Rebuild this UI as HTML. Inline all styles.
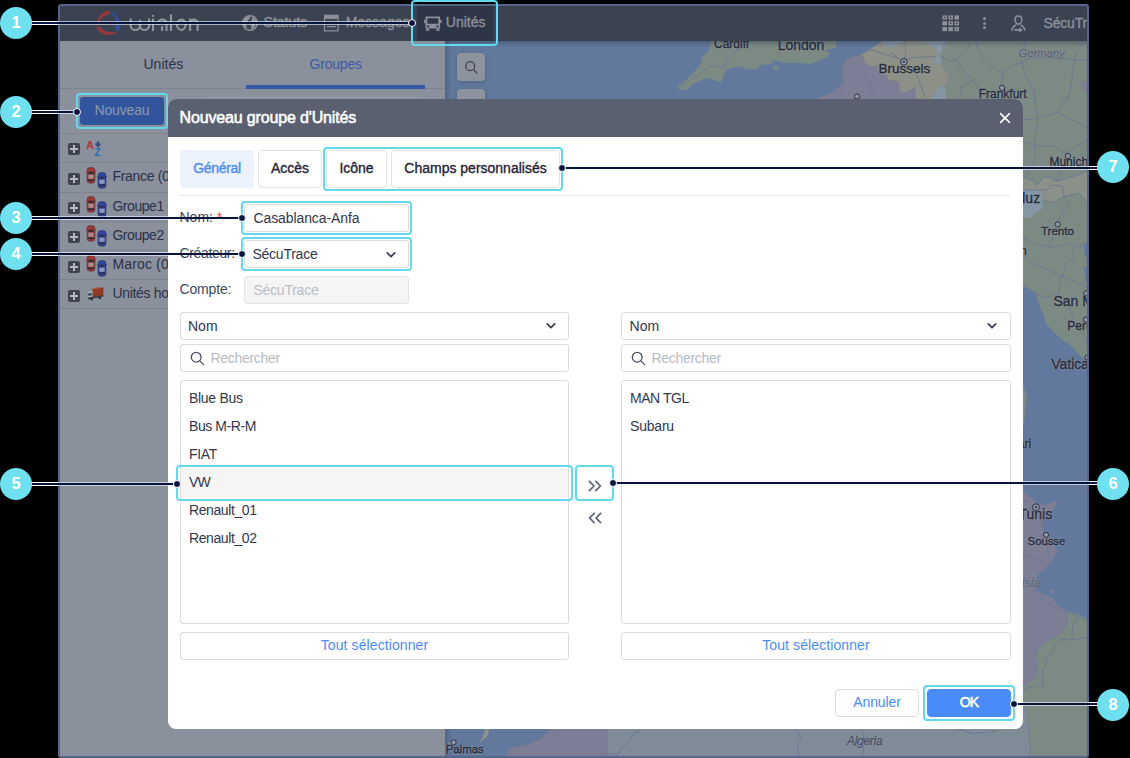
<!DOCTYPE html>
<html lang="fr">
<head>
<meta charset="utf-8">
<title>Nouveau groupe d'Unités</title>
<style>
*{box-sizing:border-box;margin:0;padding:0}
html,body{width:1130px;height:758px;overflow:hidden;background:#000}
body{position:relative;font-family:"Liberation Sans",sans-serif;font-size:14px;color:#32374e}
.abs{position:absolute}
.t{position:absolute;white-space:nowrap;line-height:16px;height:16px}
.med{-webkit-text-stroke:0.35px currentColor}
/* frame */
#frame{left:58px;top:4px;width:1031px;height:754px;background:#54668c;border-radius:3px}
#inner{left:60px;top:6px;width:1027px;height:750px;overflow:hidden;background:#8a919c}
#hdr{left:0;top:0;width:1027px;height:35px;background:#3b4352}
#hdr .t{color:#8b909a}
#acttab{left:357px;top:0;width:76px;height:35px;background:#2d3547}
#side{left:0;top:35px;width:385px;height:715px;background:#8a919c}
#map{left:385px;top:35px;width:642px;height:715px;background:#62799d;overflow:hidden}
.row-sep{position:absolute;left:0;width:385px;height:1px;background:#7d848f}
.plus{position:absolute;left:8px;width:12px;height:12px;border-radius:2px;background:#3e4452}
.plus:before{content:"";position:absolute;left:2px;top:5px;width:8px;height:2px;background:#b6bbc3}
.plus:after{content:"";position:absolute;left:5px;top:2px;width:2px;height:8px;background:#b6bbc3}
.mapbtn{position:absolute;width:28px;height:28px;border-radius:4px;background:#8d939d;box-shadow:0 1px 4px rgba(30,42,66,.3)}
.ml{position:absolute;white-space:nowrap;color:#262b39;font-size:12px;line-height:14px;-webkit-text-stroke:0.4px currentColor;text-shadow:0 0 2px rgba(165,172,185,.9),0 0 1px rgba(165,172,185,.9)}
/* modal */
#modal{left:168px;top:99px;width:855px;height:630px;background:#fff;border-radius:8px;overflow:hidden}
#mhead{left:0;top:0;width:855px;height:38px;background:#5a6070}
.tab{position:absolute;top:51px;height:38px;border:1px solid #e2e2e2;border-radius:4px;background:#fff;color:#1f2437;text-align:center;line-height:34px}
.inp{position:absolute;height:28px;border:1px solid #dcdcdc;border-radius:3px;background:#fff;line-height:26px;padding-left:8px;white-space:nowrap}
.lbl{color:#42485d}
.list{position:absolute;top:281px;width:389px;height:244px;border:1px solid #dcdcdc;border-radius:3px}
.li{position:absolute;left:0;width:387px;height:28px;line-height:28px;padding-left:8px;white-space:nowrap}
.blue{color:#4a8cf7}
/* annotations */
.circ{position:absolute;width:32px;height:32px;border-radius:50%;background:#6ee0f0;color:#fff;font-weight:700;font-size:16.5px;line-height:30px;text-align:center}
.lnw{position:absolute;height:4px;background:#fff}
.lng{position:absolute;height:4px;background:rgba(255,255,255,.6)}
.ln{position:absolute;height:2px;background:#05153f}
.dot{position:absolute;width:8px;height:8px;border-radius:50%;background:#05153f;border:1px solid #fff}
.box{position:absolute;border:2px solid #62d9ef;border-radius:4px}
</style>
</head>
<body>
<div id="frame" class="abs"></div>
<div id="inner" class="abs">
  <!-- HEADER -->
  <div id="hdr" class="abs">
    <div id="acttab" class="abs"></div>
    
    <!-- logo -->
    <svg class="abs" style="left:32px;top:0" width="40" height="34" viewBox="92 6 40 34">
      <path d="M110.2 12.7 C110.4 11.2 108.6 10.6 107.2 10.9 C105 11.4 103.3 12.3 101.9 13.6 C100.3 15 99.1 16.7 98.3 18.6 C97.6 20.2 97 22.4 96.7 25 C97.4 23.4 98.2 22.3 99.2 21.2 C99.7 20.4 100.3 19.7 101 19 C102.3 17.6 103.8 16.5 105.5 15.6 C107 14.8 109.8 14.6 110.2 12.7Z" fill="#953a3b"/>
      <path d="M96.5 27.1 C96.6 28.2 97.1 29.2 97.8 30.2 C98.9 31.6 100.4 32.7 102.3 33.4 C104.3 34.3 106.6 34.9 109 34.9 C111 34.9 112.8 34.4 114.4 33.6 C115.8 33 117 32.2 118 31.3 C116.8 31.8 115.6 32 114.4 32 C112.6 32.3 110.8 32.3 109 32 C107.1 31.7 105.3 31.1 103.7 30.2 C102.2 29.4 101.2 27.8 99.8 27.1 C98.6 26.4 97 26.2 96.5 27.1Z" fill="#953a3b"/>
      <path d="M110.4 11.2 C111.8 11.8 113.2 12.6 114.4 13.6 C115.9 14.8 117.1 16.1 118 17.7 C119 19.3 119.6 21.1 119.8 23 C120 24.4 120.2 25.8 120 27.1 C119.9 28.3 119.6 29.4 118.9 30.2 C118.5 30.8 117.9 31 117.3 30.9 C116.3 30.8 115.6 30.1 115.5 29.3 C115.2 28.1 115.2 26.9 115.3 25.7 C115.6 24.1 116 22.4 116 20.8 C116 19.2 115.4 17.7 114.4 16.3 C113.5 14.8 112.2 13.5 110.8 12.3Z" fill="#2d4ea7"/>
    </svg>
    <svg class="abs" style="left:65px;top:2px" width="80" height="30" viewBox="125 8 80 30" fill="none" stroke="#8d939c" stroke-width="2.1">
      <path d="M130.7 18.6 V25.4 a4.6 4.6 0 0 0 9.2 0 V19.8 M139.9 25.4 a4.6 4.6 0 0 0 9.2 0 V18.6"/>
      <path d="M153 18.6 V31"/><circle cx="153" cy="15.9" r="1.1" fill="#8d939c" stroke="none"/>
      <path d="M158.3 24.9 V23.5 a4.1 4.1 0 0 1 8.2 0 V31 M162.1 26.2 V31"/>
      <path d="M171 14.4 V31"/>
      <ellipse cx="181.3" cy="24.8" rx="4.3" ry="5.15"/>
      <path d="M190.1 18.6 V31 M190.1 23.4 a3.75 3.75 0 0 1 7.5 0 V31"/>
    </svg>
    <!-- statuts -->
    <svg class="abs" style="left:181px;top:8px" width="18" height="18" viewBox="0 0 18 18">
      <circle cx="9" cy="9" r="7.3" fill="#3b4352" stroke="#8b909a" stroke-width="1.5"/>
      <path d="M3 5.2 C4.6 3 7 2.2 9.4 2.3 L8.6 5 L6.4 6.4 L7.4 8.6 L5.2 10.6 L6 14.6 C4 13.6 2.4 11.4 2.3 9 C2.3 7.6 2.5 6.4 3 5.2Z" fill="#8b909a"/>
      <path d="M11.6 3 C13.8 4 15.4 6 15.7 8.4 L13.2 7.4 L11.2 8.2 L10.4 6 Z" fill="#8b909a"/>
      <path d="M9.6 10.4 L12.6 10 L14.6 11.6 C13.6 13.8 11.8 15.2 9.6 15.6 L10.4 13 Z" fill="#8b909a"/>
    </svg>
    <div class="t med" style="left:203.6px;top:8px">Statuts</div>
    <!-- messages -->
    <svg class="abs" style="left:263px;top:8px" width="17" height="18" viewBox="0 0 17 18" fill="none" stroke="#8b909a">
      <rect x="1.5" y="1.3" width="13.6" height="15.6" stroke-width="1.2"/>
      <rect x="1.5" y="1.3" width="13.6" height="3.6" fill="#8b909a" stroke="none"/>
      <path d="M4 9.2 H12.6 M4 12.6 H12.6" stroke-width="1.3"/>
    </svg>
    <div class="t med" style="left:285.7px;top:8px">Messages</div>
    <!-- unites -->
    <svg class="abs" style="left:364px;top:9.5px" width="17.6" height="15.4" viewBox="0 0 19 16" preserveAspectRatio="none">
      <path d="M2.6 0.6 H16.4 a1 1 0 0 1 1 1 V13 H1.6 V1.6 a1 1 0 0 1 1 -1Z M3.6 2.4 V8 H15.4 V2.4Z M3.2 10 v1.6 h2.6 V10Z M13.2 10 v1.6 h2.6 V10Z" fill="#8b909a" fill-rule="evenodd"/>
      <rect x="0" y="4" width="1.6" height="3.4" fill="#8b909a"/><rect x="17.4" y="4" width="1.6" height="3.4" fill="#8b909a"/>
      <rect x="2.2" y="13" width="3.4" height="2.4" fill="#8b909a"/><rect x="13.4" y="13" width="3.4" height="2.4" fill="#8b909a"/>
    </svg>
    <div class="t med" style="left:385.8px;top:8px">Unités</div>
    <!-- apps grid -->
    <svg class="abs" style="left:881.5px;top:8.5px" width="18" height="17" viewBox="0 0 18 17" fill="#8b909a">
      <rect x="0.4" y="0.4" width="4.6" height="4.2"/><rect x="6.4" y="0.4" width="4.6" height="4.2"/><rect x="12.4" y="0.4" width="4.6" height="4.2"/>
      <rect x="0.4" y="6.2" width="4.6" height="4.2"/><rect x="6.4" y="6.2" width="4.6" height="4.2"/><rect x="12.4" y="6.2" width="4.6" height="4.2"/>
      <rect x="0.4" y="12" width="4.6" height="4.2"/><rect x="6.4" y="12" width="4.6" height="4.2"/><rect x="12.4" y="12" width="4.6" height="4.2"/>
      <g fill="#3b4352"><rect x="2" y="1.8" width="1.4" height="1.4"/><rect x="8" y="1.8" width="1.4" height="1.4"/><rect x="8" y="7.6" width="1.4" height="1.4"/><rect x="14" y="7.6" width="1.4" height="1.4"/><rect x="14" y="13.4" width="1.4" height="1.4"/></g>
    </svg>
    <div class="abs" style="left:922.6px;top:11.2px;width:3px;height:3px;border-radius:50%;background:#8b909a"></div>
    <div class="abs" style="left:922.6px;top:15.6px;width:3px;height:3px;border-radius:50%;background:#8b909a"></div>
    <div class="abs" style="left:922.6px;top:20px;width:3px;height:3px;border-radius:50%;background:#8b909a"></div>
    <!-- user -->
    <svg class="abs" style="left:950px;top:8.5px" width="17" height="19" viewBox="0 0 17 19" fill="none" stroke="#8b909a" stroke-width="1.5">
      <path d="M8.4 1 C10.6 1 11.8 2.6 11.8 4.6 C11.8 6.8 10.4 9.2 8.4 9.2 C6.4 9.2 5 6.8 5 4.6 C5 2.6 6.2 1 8.4 1Z"/>
      <path d="M2 15.8 C2.2 12.4 3.6 11 6.2 10 M10.6 10 C13.2 11 14.6 12.4 14.8 15.8"/>
      <path d="M4.4 14 H9.4 V12 L12.8 14.9 L9.4 17.8 V15.8 H4.4Z" fill="#8b909a" stroke="none"/>
    </svg>
    <div class="t med" style="left:983.6px;top:8.5px;letter-spacing:-0.2px">SécuTrace</div>

  </div>
  <!-- SIDEBAR -->
  <div id="side" class="abs">
    
    <div class="t" style="left:83.5px;top:15px;color:#2c3046">Unités</div>
    <div class="t" style="left:249.5px;top:15px;color:#3a59a6;letter-spacing:-0.2px">Groupes</div>
    <div class="abs" style="left:0;top:47px;width:385px;height:1px;background:#7d848f"></div>
    <div class="abs" style="left:186px;top:44px;width:179px;height:4px;background:#355aa7"></div>
    <div class="abs" style="left:20px;top:56px;width:84px;height:28px;border-radius:3px;background:#30559d;color:#8e98b3;text-align:center;line-height:27px;letter-spacing:-0.15px">Nouveau</div>
    <div class="abs" style="left:145px;top:56px;width:219px;height:28px;border-radius:3px;border:1px solid #949aa4;background:#8c939d"></div>
    <div class="row-sep" style="top:92px"></div>
    <div class="row-sep" style="top:121px"></div>
    <div class="row-sep" style="top:151px"></div>
    <div class="row-sep" style="top:180px"></div>
    <div class="row-sep" style="top:209px"></div>
    <div class="row-sep" style="top:238px"></div>
    <div class="row-sep" style="top:267px"></div>
    <div class="plus" style="top:102px"></div>
    <div class="plus" style="top:132px"></div>
    <div class="plus" style="top:161px"></div>
    <div class="plus" style="top:190px"></div>
    <div class="plus" style="top:220px"></div>
    <div class="plus" style="top:249px"></div>
    <svg class="abs" style="left:26px;top:99px" width="17" height="20" viewBox="0 0 17 20">
      <text x="0" y="8.9" font-family="Liberation Sans" font-size="11" font-weight="700" fill="#ab383b">A</text>
      <text x="8.4" y="15.9" font-family="Liberation Sans" font-size="10" font-weight="700" fill="#2b6bb3">Z</text>
      <path d="M12 1 V5.4 M9.6 3.4 L12 6.4 L14.4 3.4" stroke="#384c78" stroke-width="1.7" fill="none"/>
    </svg>
    <div class="t" style="left:52.4px;top:126.5px;color:#2c3048;letter-spacing:-0.3px">France (0)</div>
    <div class="t" style="left:52.4px;top:156.5px;color:#2c3048;letter-spacing:-0.45px">Groupe1 (3)</div>
    <div class="t" style="left:52.4px;top:186px;color:#2c3048;letter-spacing:-0.45px">Groupe2 (2)</div>
    <div class="t" style="left:52.4px;top:214.5px;color:#2c3048;letter-spacing:0.15px">Maroc (0)</div>
    <div class="t" style="left:52.4px;top:244px;color:#2c3048;letter-spacing:-0.3px">Unités hors groupes</div>
<svg class="abs" style="left:25.8px;top:126px" width="10" height="17" viewBox="0 0 10 17">
 <rect x="1" y="0.6" width="8" height="15.6" rx="3" fill="#9c3838" stroke="#4a2a30" stroke-width="0.5"/>
 <rect x="0" y="4" width="1.2" height="1.6" fill="#a53d3d"/><rect x="8.8" y="4" width="1.2" height="1.6" fill="#a53d3d"/>
 <path d="M2 5.2 Q5 3.6 8 5.2 L7.4 7.2 H2.6Z" fill="#2e3038"/>
 <rect x="2.4" y="7.6" width="5.2" height="4.2" fill="#a98a8e"/>
 <path d="M2.4 12.2 H7.6 L8 13.8 Q5 14.8 2 13.8Z" fill="#2e3038"/>
</svg>
<svg class="abs" style="left:36.6px;top:130.5px" width="10" height="17" viewBox="0 0 10 17">
 <rect x="1" y="0.6" width="8" height="15.6" rx="3" fill="#3144a2" stroke="#232a55" stroke-width="0.5"/>
 <rect x="0" y="4" width="1.2" height="1.6" fill="#3549a6"/><rect x="8.8" y="4" width="1.2" height="1.6" fill="#3549a6"/>
 <path d="M2 5.2 Q5 3.6 8 5.2 L7.4 7.2 H2.6Z" fill="#30344a"/>
 <rect x="2.4" y="7.6" width="5.2" height="4.2" fill="#8f98b8"/>
 <path d="M2.4 12.2 H7.6 L8 13.8 Q5 14.8 2 13.8Z" fill="#30344a"/>
</svg>
<svg class="abs" style="left:25.8px;top:155px" width="10" height="17" viewBox="0 0 10 17">
 <rect x="1" y="0.6" width="8" height="15.6" rx="3" fill="#9c3838" stroke="#4a2a30" stroke-width="0.5"/>
 <rect x="0" y="4" width="1.2" height="1.6" fill="#a53d3d"/><rect x="8.8" y="4" width="1.2" height="1.6" fill="#a53d3d"/>
 <path d="M2 5.2 Q5 3.6 8 5.2 L7.4 7.2 H2.6Z" fill="#2e3038"/>
 <rect x="2.4" y="7.6" width="5.2" height="4.2" fill="#a98a8e"/>
 <path d="M2.4 12.2 H7.6 L8 13.8 Q5 14.8 2 13.8Z" fill="#2e3038"/>
</svg>
<svg class="abs" style="left:36.6px;top:159.5px" width="10" height="17" viewBox="0 0 10 17">
 <rect x="1" y="0.6" width="8" height="15.6" rx="3" fill="#3144a2" stroke="#232a55" stroke-width="0.5"/>
 <rect x="0" y="4" width="1.2" height="1.6" fill="#3549a6"/><rect x="8.8" y="4" width="1.2" height="1.6" fill="#3549a6"/>
 <path d="M2 5.2 Q5 3.6 8 5.2 L7.4 7.2 H2.6Z" fill="#30344a"/>
 <rect x="2.4" y="7.6" width="5.2" height="4.2" fill="#8f98b8"/>
 <path d="M2.4 12.2 H7.6 L8 13.8 Q5 14.8 2 13.8Z" fill="#30344a"/>
</svg>
<svg class="abs" style="left:25.8px;top:184px" width="10" height="17" viewBox="0 0 10 17">
 <rect x="1" y="0.6" width="8" height="15.6" rx="3" fill="#9c3838" stroke="#4a2a30" stroke-width="0.5"/>
 <rect x="0" y="4" width="1.2" height="1.6" fill="#a53d3d"/><rect x="8.8" y="4" width="1.2" height="1.6" fill="#a53d3d"/>
 <path d="M2 5.2 Q5 3.6 8 5.2 L7.4 7.2 H2.6Z" fill="#2e3038"/>
 <rect x="2.4" y="7.6" width="5.2" height="4.2" fill="#a98a8e"/>
 <path d="M2.4 12.2 H7.6 L8 13.8 Q5 14.8 2 13.8Z" fill="#2e3038"/>
</svg>
<svg class="abs" style="left:36.6px;top:188.5px" width="10" height="17" viewBox="0 0 10 17">
 <rect x="1" y="0.6" width="8" height="15.6" rx="3" fill="#3144a2" stroke="#232a55" stroke-width="0.5"/>
 <rect x="0" y="4" width="1.2" height="1.6" fill="#3549a6"/><rect x="8.8" y="4" width="1.2" height="1.6" fill="#3549a6"/>
 <path d="M2 5.2 Q5 3.6 8 5.2 L7.4 7.2 H2.6Z" fill="#30344a"/>
 <rect x="2.4" y="7.6" width="5.2" height="4.2" fill="#8f98b8"/>
 <path d="M2.4 12.2 H7.6 L8 13.8 Q5 14.8 2 13.8Z" fill="#30344a"/>
</svg>
<svg class="abs" style="left:25.8px;top:214px" width="10" height="17" viewBox="0 0 10 17">
 <rect x="1" y="0.6" width="8" height="15.6" rx="3" fill="#9c3838" stroke="#4a2a30" stroke-width="0.5"/>
 <rect x="0" y="4" width="1.2" height="1.6" fill="#a53d3d"/><rect x="8.8" y="4" width="1.2" height="1.6" fill="#a53d3d"/>
 <path d="M2 5.2 Q5 3.6 8 5.2 L7.4 7.2 H2.6Z" fill="#2e3038"/>
 <rect x="2.4" y="7.6" width="5.2" height="4.2" fill="#a98a8e"/>
 <path d="M2.4 12.2 H7.6 L8 13.8 Q5 14.8 2 13.8Z" fill="#2e3038"/>
</svg>
<svg class="abs" style="left:36.6px;top:218.5px" width="10" height="17" viewBox="0 0 10 17">
 <rect x="1" y="0.6" width="8" height="15.6" rx="3" fill="#3144a2" stroke="#232a55" stroke-width="0.5"/>
 <rect x="0" y="4" width="1.2" height="1.6" fill="#3549a6"/><rect x="8.8" y="4" width="1.2" height="1.6" fill="#3549a6"/>
 <path d="M2 5.2 Q5 3.6 8 5.2 L7.4 7.2 H2.6Z" fill="#30344a"/>
 <rect x="2.4" y="7.6" width="5.2" height="4.2" fill="#8f98b8"/>
 <path d="M2.4 12.2 H7.6 L8 13.8 Q5 14.8 2 13.8Z" fill="#30344a"/>
</svg>
    <svg class="abs" style="left:27px;top:246px" width="18" height="14" viewBox="0 0 18 14">
      <path d="M5.4 2.2 L16.4 0.4 V9 L5.4 11.2Z" fill="#93391f"/>
      <path d="M5.4 2.2 L16.4 0.4 L14.6 0 L4 1.6Z" fill="#b4593a"/>
      <path d="M0.8 6 Q1 4.6 2.6 4.4 L5.4 4 V11.4 L0.8 12Z" fill="#a9afb8"/>
      <path d="M1.2 6.6 L4.8 6 V8.2 L1.2 8.8Z" fill="#3a3f4c"/>
      <path d="M0.8 10.6 L16.4 8.2 V9.6 L0.8 12.4Z" fill="#3c404c"/>
      <circle cx="4.6" cy="12" r="1.4" fill="#2a2d35"/><circle cx="12.8" cy="10.8" r="1.4" fill="#2a2d35"/>
    </svg>

  </div>
  <!-- MAP -->
  <div id="map" class="abs">
    <svg class="abs" style="left:0;top:0" width="642" height="715" viewBox="445 41 642 715">
<rect x="445" y="41" width="642" height="715" fill="#62799d"/>
<polygon points="711,41 708.7,50.6 702.5,56.8 701,63.9 688.3,78 677.7,86 677.3,88.7 686.5,89.9 692.7,84.2 706,78 713,79.8 721,82.5 726.4,69.2 737.9,66.5 748.5,69.2 758.2,69.2 758.6,65.7 769.7,63.9 775,62.1 772.4,59.5 783.9,63 794.5,62.7 810.4,63.9 826.4,57.7 829.9,53.3 824.6,49.7 836.1,48 836.6,42.7 835.2,41" fill="#7b8a83"/>
<polygon points="771.2,67.4 775.9,64.8 780,67.4 775.9,69.7" fill="#7b8a83"/>
<g fill="none" stroke="#6b7791" stroke-width="0.95"><path d="M678 88 L712 65.5 L723.5 67.8 L727 60 L736.5 51 L738 41"/></g>
<polygon points="881.4,41 1087,41 1087,361 1082.6,358 1075.3,351.6 1069.7,344.2 1063.2,340.8 1054,332.4 1045.7,323.2 1043.9,315.8 1039.2,304.7 1036.5,295.5 1029,289 1023,286.3 1000,286 1000,120 816,120 817.7,98.4 831.9,93.1 843.4,82.5 841.6,66.5 847.8,58.6 862,54.2 870.8,48.8" fill="#7b8a83"/>
<polygon points="862,54.2 865.5,63 870.8,66.5 877.9,64.8 879.6,72.7 886.7,75.4 888.5,79.8 899.1,81.6 900.9,93.1 908,91.3 915,86.4 915.9,98.4 916,120 816,120 817.7,98.4 831.9,93.1 843.4,82.5 841.6,66.5 847.8,58.6" fill="#7d7e96"/>
<polygon points="862,54.2 870.8,48.8 881.4,43 892,48 899,44.4 906.2,41 922,41 927.4,43.5 936.3,50.6 937.2,55.9 933.6,59.5 934.5,63 941.6,64.8 946.9,72.7 948.7,78 944.2,86 939.8,86.9 934.5,93.1 930,99 930,120 916,120 915.9,98.4 915,86.4 908,91.3 900.9,93.1 899.1,81.6 888.5,79.8 886.7,75.4 879.6,72.7 877.9,64.8 870.8,66.5 865.5,63" fill="#8c9086"/>
<polygon points="881.4,41 883,44.5 888,47.5 895,47.2 900,43.5 905,41" fill="#8596a4"/>
<polygon points="922,41 947,41 945.5,47 942.6,50.5 940,54 941.6,61 941,65 934.5,63 933.6,59.5 937.2,55.9 936.3,50.6 927.4,43.5" fill="#8596a4"/>
<polygon points="939.8,86.9 944.2,86 946,93 947,120 930,120 930,99 934.5,93.1" fill="#8596a4"/>
<polygon points="1079.5,80.6 1087,82 1087,92.6 1083.2,89.6" fill="#7d7e96"/>
<polygon points="1023,177.4 1033.8,180.6 1037,185.3 1043.4,176.6 1052,178.2 1056,181.4 1070.3,177.4 1079.8,174.2 1087.7,171 1087.7,204.4 1079.8,193.3 1064,196.4 1052.9,202.8 1041.8,199.6 1041.8,190 1023,190" fill="#8b9088"/>
<polygon points="1000,190 1041.8,190 1041.8,199.6 1043,207 1042,208.7 1033.7,214.2 1031.9,217.9 1023,217 1000,217" fill="#8596a4"/>
<polygon points="1083.6,244.7 1087,243 1087,258.6 1084.5,253" fill="#62799d"/>
<polygon points="1083.6,266.9 1087,266 1087,284.4 1085.4,278.9" fill="#62799d"/>
<polygon points="1000,388 1023.2,388.6 1025.4,390.4 1026.9,398.7 1025,408.9 1024.5,420 1023,427 1000,427" fill="#7b8a83"/>
<polygon points="1000,492.9 1023.2,492.9 1027.2,493.3 1029,496.6 1032.8,498.5 1036.5,504 1045.7,504.9 1055.9,500.7 1057.7,504 1051.2,511.4 1043.9,519.7 1042,527.1 1045.7,532.6 1052.2,541 1057.7,551.1 1053.1,559.4 1047.6,566.8 1038.3,574.2 1034.6,583.4 1036.5,590.8 1048.5,596.4 1054,598.2 1056.8,605.6 1067,610.4 1068,626 1060.7,633.4 1045.1,642.7 1037.8,650 1035.7,657.3 1038.8,668.8 1032.6,680.3 1023.2,686.5 1000,690" fill="#7d7e96"/>
<polygon points="1049.4,590.8 1054,589.9 1054,593.6 1049.4,593.6" fill="#7d7e96"/>
<polygon points="1067,610.4 1078.5,614.6 1087,618.8 1087,756 1028.4,756 1030.5,750 1029.5,741.8 1028.4,725 1026.3,710.5 1023.2,706.3 1000,706 1000,690 1023.2,686.5 1032.6,680.3 1038.8,668.8 1035.7,657.3 1037.8,650 1045.1,642.7 1060.7,633.4 1068,626" fill="#7b8a83"/>
<polygon points="607.8,700 1000,700 1000,706 1023.2,706.3 1026.3,710.5 1028.4,725 1029.5,741.8 1030.5,750 1028.4,756 607.8,756" fill="#7f8c98"/>
<polygon points="549.7,729 546.2,733.5 539.1,739.7 525,745 511.7,747.3 504.6,756 607.8,756 607.8,700 560,700" fill="#7d7e96"/>
<polygon points="485.1,729 489.2,729 487.8,735.3 483.4,739.7 478,743.2 482.5,737.9" fill="#8f9482"/>
<polygon points="447,743.5 450,742 453,744 451,746.5 447.5,746" fill="#8a8f92"/>
<g fill="none" stroke="#6b7791" stroke-width="0.95" stroke-linejoin="round"><path d="M849.6 57.7 L870.8 49.7 L899 58.6 L903.9 61.8 L911.5 57.7 L936 56.5"/><path d="M905 41 L906 50 L903.9 61.8"/><path d="M849 58 L862 75 L871 83 L876 99"/><path d="M842 66 L844 84 L840 99"/><path d="M871 83 L869 99"/><path d="M917 75 L921 86 L926 99"/><path d="M899 58.6 L890 52"/><path d="M970.4 41.5 L968.1 49 L957.6 58.8 L950 61.8 L938 55"/><path d="M956.9 60.3 L965.1 73.1 L973.4 79.9 L978.7 89.6 L980 99"/><path d="M973.4 79.9 L960.6 86.6 L961.4 94.2 L958.4 99.4"/><path d="M974.9 41.5 L980.2 53.5 L995.2 68.6 L1002.7 73.9 L1005.8 69.3 L1031.3 58 L1062.9 58 L1075 60.3 L1087 59.5"/><path d="M1003.5 74.6 L1000.5 85.9"/><path d="M1025.3 41.5 L1020.8 56.5 L1025.3 76.1 L1034.3 91.1 L1035.1 99.4 L1033.8 95 L1037.8 118.8 L1034.6 142.5 L1035.4 160 L1024.3 177.4"/><path d="M1083.2 41.5 L1076.5 52 L1074.2 61.1 L1070.4 89.6 L1067.4 99.4"/><path d="M945 41 L943 50"/><path d="M1023.5 119.6 L1037 118.8 L1057.6 112.4 L1068.7 95"/><path d="M1057.6 112.4 L1070.3 118.8 L1087.7 127.5"/><path d="M1023.5 141.8 L1035.4 145.7 L1054.5 146.5 L1065.5 153.6 L1087.7 139.4"/><path d="M1023 177.4 L1033.8 180.6 L1037 185.3 L1043.4 176.6 L1052 178.2 L1056 181.4 L1070.3 177.4 L1079.8 174.2 L1087.7 171"/><path d="M1023 190 L1046.5 190 L1051.3 185.3 L1062.4 186.1 L1064 196.4 L1079.8 193.3 L1087.7 204.4"/><path d="M1041.8 199.6 L1052.9 202.8 L1064 196.4 L1068 205"/><path d="M1056 181.4 L1062 170 L1067.9 158"/><path d="M1070.6 205 L1062.3 211.5 L1057.7 222.5"/><path d="M1053 237.3 L1049.4 245.6"/><path d="M1023.2 238.2 L1036.5 243.8 L1052.2 247.5 L1067.9 243.8 L1077.1 247.5 L1087.3 241.9"/><path d="M1073.4 249.3 L1072.5 257.6 L1066.9 264.1 L1062.3 276.1"/><path d="M1023.2 255.8 L1032.8 263.2 L1062.3 276.1 L1087.3 288.1"/><path d="M1060.5 276.1 L1059 293.7"/><path d="M1023.2 284.4 L1038.3 295.5 L1047.6 297.4 L1059 293.7"/><path d="M1067.9 304.7 L1075.3 323.2 L1087.3 341.7"/><path d="M1023 500.3 L1031 502.2"/><path d="M1042 519.7 L1041.6 528 L1045.7 533 L1047.6 546.5 L1048.5 565 L1034.6 589 L1043.9 602.8 L1058.6 609.3 L1079 616.7 L1087 620"/><path d="M1023 555.7 L1036.5 557.6 L1048.5 565"/><path d="M1078.5 616.7 L1072.6 626 L1071.8 639.6"/><path d="M1086.8 637.5 L1071.8 640 L1061.8 639.2 L1055.1 643.8 L1050.3 655.2 L1046.1 657.3 L1045.5 666.7 L1042.6 669.8 L1042.6 687.6 L1034.7 685.9 L1023.2 689.2"/><path d="M558.6 729 L553.3 732.6 L548 733.5"/><path d="M511.7 747.3 L509.9 755.6"/><path d="M549.7 729 L546.2 733.5 L539.1 739.7 L525 745 L511.7 747.3"/><path d="M640 730.8 L634.7 732.3 L625.8 745 L620.5 748.5 L618.8 753.9 L606.4 755"/><path d="M795.8 729 L801 738 L797.5 743 L798.6 755.6"/><path d="M861 729 L864 736 L863 755.6"/><path d="M956.8 729 L972.7 733.7 L997.5 730.8"/><path d="M1028.4 725 L1029.5 741.8 L1030.5 750 L1028.4 756"/></g>
<circle cx="903.9" cy="61.8" r="3.4" fill="#8f95a8" stroke="#2c3140" stroke-width="1"/><circle cx="903.9" cy="61.8" r="1.1" fill="#2c3140"/><circle cx="1002.1" cy="87.8" r="2.6" fill="#8f95a8" stroke="#2c3140" stroke-width="1"/><circle cx="1067.9" cy="156" r="2.6" fill="#8f95a8" stroke="#2c3140" stroke-width="1"/><circle cx="1057.7" cy="224.4" r="2.6" fill="#8f95a8" stroke="#2c3140" stroke-width="1"/><circle cx="1086.3" cy="293.3" r="2.6" fill="#8f95a8" stroke="#2c3140" stroke-width="1"/><circle cx="1086" cy="319.5" r="2.6" fill="#8f95a8" stroke="#2c3140" stroke-width="1"/><circle cx="1087.5" cy="357.5" r="2.6" fill="#8f95a8" stroke="#2c3140" stroke-width="1"/><circle cx="1035.9" cy="507.2" r="3.4" fill="#8f95a8" stroke="#2c3140" stroke-width="1"/><circle cx="1035.9" cy="507.2" r="1.1" fill="#2c3140"/><circle cx="1046" cy="534.9" r="2.6" fill="#8f95a8" stroke="#2c3140" stroke-width="1"/><circle cx="453.6" cy="742.4" r="2.6" fill="#8f95a8" stroke="#2c3140" stroke-width="1"/><circle cx="857" cy="96.5" r="2.6" fill="#8f95a8" stroke="#2c3140" stroke-width="1"/>
</svg>
<div class="abs" style="left:0;top:0;width:7px;height:715px;background:linear-gradient(90deg,rgba(40,50,70,.28),rgba(40,50,70,0))"></div>
<div class="mapbtn" style="left:12px;top:12px"><svg class="abs" style="left:6.5px;top:6.8px" width="14.6" height="14.6" viewBox="0 0 16 16" fill="none" stroke="#3d4250" stroke-width="1.35" stroke-linecap="round"><circle cx="6.8" cy="6.8" r="4.9"/><path d="M10.5 10.5 L14.2 14.2"/></svg></div><div class="mapbtn" style="left:12px;top:48px"></div>
<div class="ml" style="left:269.0px;top:-3.9px;font-size:12px;">Cardiff</div>
<div class="ml" style="left:332.7px;top:-2.6px;font-size:14px;">London</div>
<div class="ml" style="left:433.4px;top:20.9px;font-size:13.5px;">Brussels</div>
<div class="ml" style="left:533.7px;top:45.7px;font-size:12px;">Frankfurt</div>
<div class="ml" style="left:573.5px;top:4.5px;font-size:11.2px;font-style:italic;color:#5b6373">Germany</div>
<div class="ml" style="left:604.4px;top:114.1px;font-size:12px;">Munich</div>
<div class="ml" style="left:556.5px;top:149.7px;font-size:14px;">Vaduz</div>
<div class="ml" style="left:596.0px;top:183.1px;font-size:11.5px;">Trento</div>
<div class="ml" style="left:608.5px;top:252.7px;font-size:14px;">San Marino</div>
<div class="ml" style="left:622.3px;top:277.7px;font-size:12px;">Perugia</div>
<div class="ml" style="left:606.2px;top:316.3px;font-size:14px;">Vatican</div>
<div class="ml" style="left:545.5px;top:395.7px;font-size:12px;">Cagliari</div>
<div class="ml" style="left:573.5px;top:466.4px;font-size:14px;">Tunis</div>
<div class="ml" style="left:582.6px;top:493.0px;font-size:11.3px;">Sousse</div>
<div class="ml" style="left:557.3px;top:535.1px;font-size:12px;font-style:italic;color:#5b6373">Tunisia</div>
<div class="ml" style="left:402.0px;top:693.2px;font-size:12px;font-style:italic;color:#4c5263;letter-spacing:-0.3px">Algeria</div>
<div class="ml" style="left:0.7px;top:701.1px;font-size:11.4px;">Palmas</div>
<div class="ml" style="left:553.0px;top:203.4px;font-size:12px;">Milan</div>
<div class="ml" style="left:390.0px;top:57.7px;font-size:12px;">Amiens</div>

  </div>
  <div class="abs" style="left:385px;top:35px;width:642px;height:6px;background:linear-gradient(180deg,rgba(30,38,58,.32),rgba(30,38,58,0))"></div>
</div>

<!-- MODAL -->
<div id="modal" class="abs">
  <div id="mhead" class="abs"></div>
  
  <div class="t" style="left:11.5px;top:9.7px;height:18px;line-height:18px;font-size:16px;font-weight:400;-webkit-text-stroke:0.55px #fff;color:#fff;letter-spacing:-0.15px">Nouveau groupe d'Unités</div>
  <svg class="abs" style="left:830.6px;top:13px" width="12" height="12" viewBox="0 0 12 12" stroke="#fff" stroke-width="1.7" stroke-linecap="round"><path d="M1.6 1.6 L10.4 10.4 M10.4 1.6 L1.6 10.4"/></svg>
  <div class="tab med" style="left:12px;width:74px;background:#ecf2fe;border-color:#ecf2fe;color:#4a8cf7;letter-spacing:-0.3px">Général</div>
  <div class="tab med" style="left:90px;width:64px">Accès</div>
  <div class="tab med" style="left:158px;width:61px">Icône</div>
  <div class="tab med" style="left:223px;width:169px">Champs personnalisés</div>
  <div class="abs" style="left:12px;top:96px;width:831px;height:1px;background:#e6e6e6"></div>
  <div class="t lbl" style="left:11.5px;top:110px">Nom: <span style="color:#e8483f">*</span></div>
  <div class="t lbl" style="left:11.5px;top:146px;letter-spacing:-0.35px">Créateur:</div>
  <div class="t lbl" style="left:11.5px;top:182px;letter-spacing:-0.15px">Compte:</div>
  <div class="inp" style="left:76px;top:105px;width:165px;padding-left:8.5px;letter-spacing:-0.1px">Casablanca-Anfa</div>
  <div class="inp" style="left:76px;top:141px;width:165px;padding-left:7.5px;letter-spacing:-0.25px">SécuTrace</div>
  <svg class="abs" style="left:216.8px;top:151.6px" width="12" height="8" viewBox="0 0 12 8" fill="none" stroke="#3d4157" stroke-width="1.75" stroke-linecap="round" stroke-linejoin="round"><path d="M2.25 1.9 L6 5.6 L9.75 1.9"/></svg>
  <div class="inp" style="left:76px;top:177px;width:165px;background:#f5f5f5;border-color:#e4e4e4;color:#b9bdc7;padding-left:8.5px;letter-spacing:-0.25px">SécuTrace</div>

  <div class="inp" style="left:12px;top:213px;width:389px;padding-left:7px">Nom</div>
  <svg class="abs" style="left:377px;top:223.4px" width="12" height="8" viewBox="0 0 12 8" fill="none" stroke="#3d4157" stroke-width="1.75" stroke-linecap="round" stroke-linejoin="round"><path d="M2.25 1.9 L6 5.6 L9.75 1.9"/></svg>
  <div class="inp" style="left:453px;top:213px;width:390px;padding-left:7.6px">Nom</div>
  <svg class="abs" style="left:818.4px;top:223.4px" width="12" height="8" viewBox="0 0 12 8" fill="none" stroke="#3d4157" stroke-width="1.75" stroke-linecap="round" stroke-linejoin="round"><path d="M2.25 1.9 L6 5.6 L9.75 1.9"/></svg>
  <div class="inp" style="left:12px;top:245px;width:389px;padding-left:29.5px;color:#b6bac4;letter-spacing:-0.3px">Rechercher</div>
  <svg class="abs" style="left:22px;top:251.5px" width="15" height="15" viewBox="0 0 15 15" fill="none" stroke="#4a4f60" stroke-width="1.3" stroke-linecap="round"><circle cx="6.2" cy="6.2" r="4.9"/><path d="M9.9 9.9 L13.6 13.6"/></svg>
  <div class="inp" style="left:453px;top:245px;width:390px;padding-left:29.5px;color:#b6bac4;letter-spacing:-0.3px">Rechercher</div>
  <svg class="abs" style="left:463px;top:251.5px" width="15" height="15" viewBox="0 0 15 15" fill="none" stroke="#4a4f60" stroke-width="1.3" stroke-linecap="round"><circle cx="6.2" cy="6.2" r="4.9"/><path d="M9.9 9.9 L13.6 13.6"/></svg>
  <div class="list" style="left:12px">
    <div class="li" style="top:3px;letter-spacing:-0.3px">Blue Bus</div>
    <div class="li" style="top:31px;letter-spacing:-0.42px">Bus M-R-M</div>
    <div class="li" style="top:59px;letter-spacing:-0.3px">FIAT</div>
    <div class="li" style="top:87px;height:29px;background:#f5f5f5;letter-spacing:-0.9px">VW</div>
    <div class="li" style="top:115px;letter-spacing:-0.4px">Renault_01</div>
    <div class="li" style="top:143px;letter-spacing:-0.4px">Renault_02</div>
  </div>
  <div class="list" style="left:453px;width:390px">
    <div class="li" style="top:3px;letter-spacing:-0.45px">MAN TGL</div>
    <div class="li" style="top:31px;letter-spacing:-0.2px">Subaru</div>
  </div>
  <svg class="abs" style="left:420px;top:381px" width="14" height="12" viewBox="0 0 14 12" fill="none" stroke="#5b6072" stroke-width="1.7" stroke-linecap="round" stroke-linejoin="round"><path d="M1.4 1.4 L6 6 L1.4 10.6 M7.8 1.4 L12.4 6 L7.8 10.6"/></svg>
  <svg class="abs" style="left:420px;top:413px" width="14" height="12" viewBox="0 0 14 12" fill="none" stroke="#5b6072" stroke-width="1.7" stroke-linecap="round" stroke-linejoin="round"><path d="M6.2 1.4 L1.6 6 L6.2 10.6 M12.6 1.4 L8 6 L12.6 10.6"/></svg>
  <div class="inp blue" style="left:12px;top:533px;width:389px;padding:0;line-height:24px;text-align:center;letter-spacing:0.1px">Tout sélectionner</div>
  <div class="inp blue" style="left:453px;top:533px;width:390px;padding:0;line-height:24px;text-align:center;letter-spacing:0.1px">Tout sélectionner</div>
  <div class="inp blue" style="left:667px;top:590px;width:84px;padding:0;line-height:24px;text-align:center;border-radius:4px;letter-spacing:-0.1px">Annuler</div>
  <div class="inp" style="left:759px;top:590px;width:84px;padding:0;line-height:24px;text-align:center;border-radius:4px;background:#4a8bfa;border-color:#4a8bfa;color:#fff;font-weight:400;-webkit-text-stroke:0.6px #fff;letter-spacing:-0.8px">OK</div>

</div>

<!-- ANNOTATIONS -->
<div id="ann">
<div class="box" style="left:411px;top:0px;width:87px;height:46px"></div>
<div class="box" style="left:76px;top:93px;width:92px;height:36px"></div>
<div class="box" style="left:241px;top:201px;width:171px;height:34px"></div>
<div class="box" style="left:241px;top:237px;width:171px;height:34px"></div>
<div class="box" style="left:176px;top:465px;width:397px;height:36px"></div>
<div class="box" style="left:575px;top:465px;width:39px;height:36px"></div>
<div class="box" style="left:323px;top:147px;width:240px;height:44px"></div>
<div class="box" style="left:923px;top:685px;width:92px;height:36px"></div>
<div class="lnw" style="left:30px;top:21px;width:28px"></div><div class="lng" style="left:58px;top:21px;width:354px"></div><div class="ln" style="left:30px;top:22px;width:384px"></div>
<div class="lnw" style="left:30px;top:110px;width:28px"></div><div class="lng" style="left:58px;top:110px;width:19px"></div><div class="ln" style="left:30px;top:111px;width:49px"></div>
<div class="lnw" style="left:30px;top:216px;width:28px"></div><div class="lng" style="left:58px;top:216px;width:110px"></div><div class="ln" style="left:30px;top:217px;width:214px"></div>
<div class="lnw" style="left:30px;top:252px;width:28px"></div><div class="lng" style="left:58px;top:252px;width:110px"></div><div class="ln" style="left:30px;top:253px;width:214px"></div>
<div class="lnw" style="left:30px;top:482px;width:28px"></div><div class="lng" style="left:58px;top:482px;width:110px"></div><div class="ln" style="left:30px;top:483px;width:149px"></div>
<div class="lng" style="left:1023px;top:481px;width:66px"></div><div class="lnw" style="left:1089px;top:481px;width:11px"></div><div class="ln" style="left:611px;top:482px;width:489px"></div>
<div class="lng" style="left:1023px;top:166px;width:66px"></div><div class="lnw" style="left:1089px;top:166px;width:11px"></div><div class="ln" style="left:560px;top:167px;width:540px"></div>
<div class="lng" style="left:1023px;top:702px;width:66px"></div><div class="lnw" style="left:1089px;top:702px;width:11px"></div><div class="ln" style="left:1012px;top:703px;width:88px"></div>
<div class="dot" style="left:408px;top:19px"></div>
<div class="dot" style="left:73px;top:108px"></div>
<div class="dot" style="left:238px;top:214px"></div>
<div class="dot" style="left:238px;top:250px"></div>
<div class="dot" style="left:173px;top:480px"></div>
<div class="dot" style="left:609px;top:479px"></div>
<div class="dot" style="left:558px;top:164px"></div>
<div class="dot" style="left:1010px;top:700px"></div>
<div class="circ" style="left:0px;top:7px">1</div>
<div class="circ" style="left:0px;top:96px">2</div>
<div class="circ" style="left:0px;top:202px">3</div>
<div class="circ" style="left:0px;top:238px">4</div>
<div class="circ" style="left:0px;top:468px">5</div>
<div class="circ" style="left:1097px;top:468px">6</div>
<div class="circ" style="left:1097px;top:151px">7</div>
<div class="circ" style="left:1097px;top:689px">8</div>

</div>
</body>
</html>
